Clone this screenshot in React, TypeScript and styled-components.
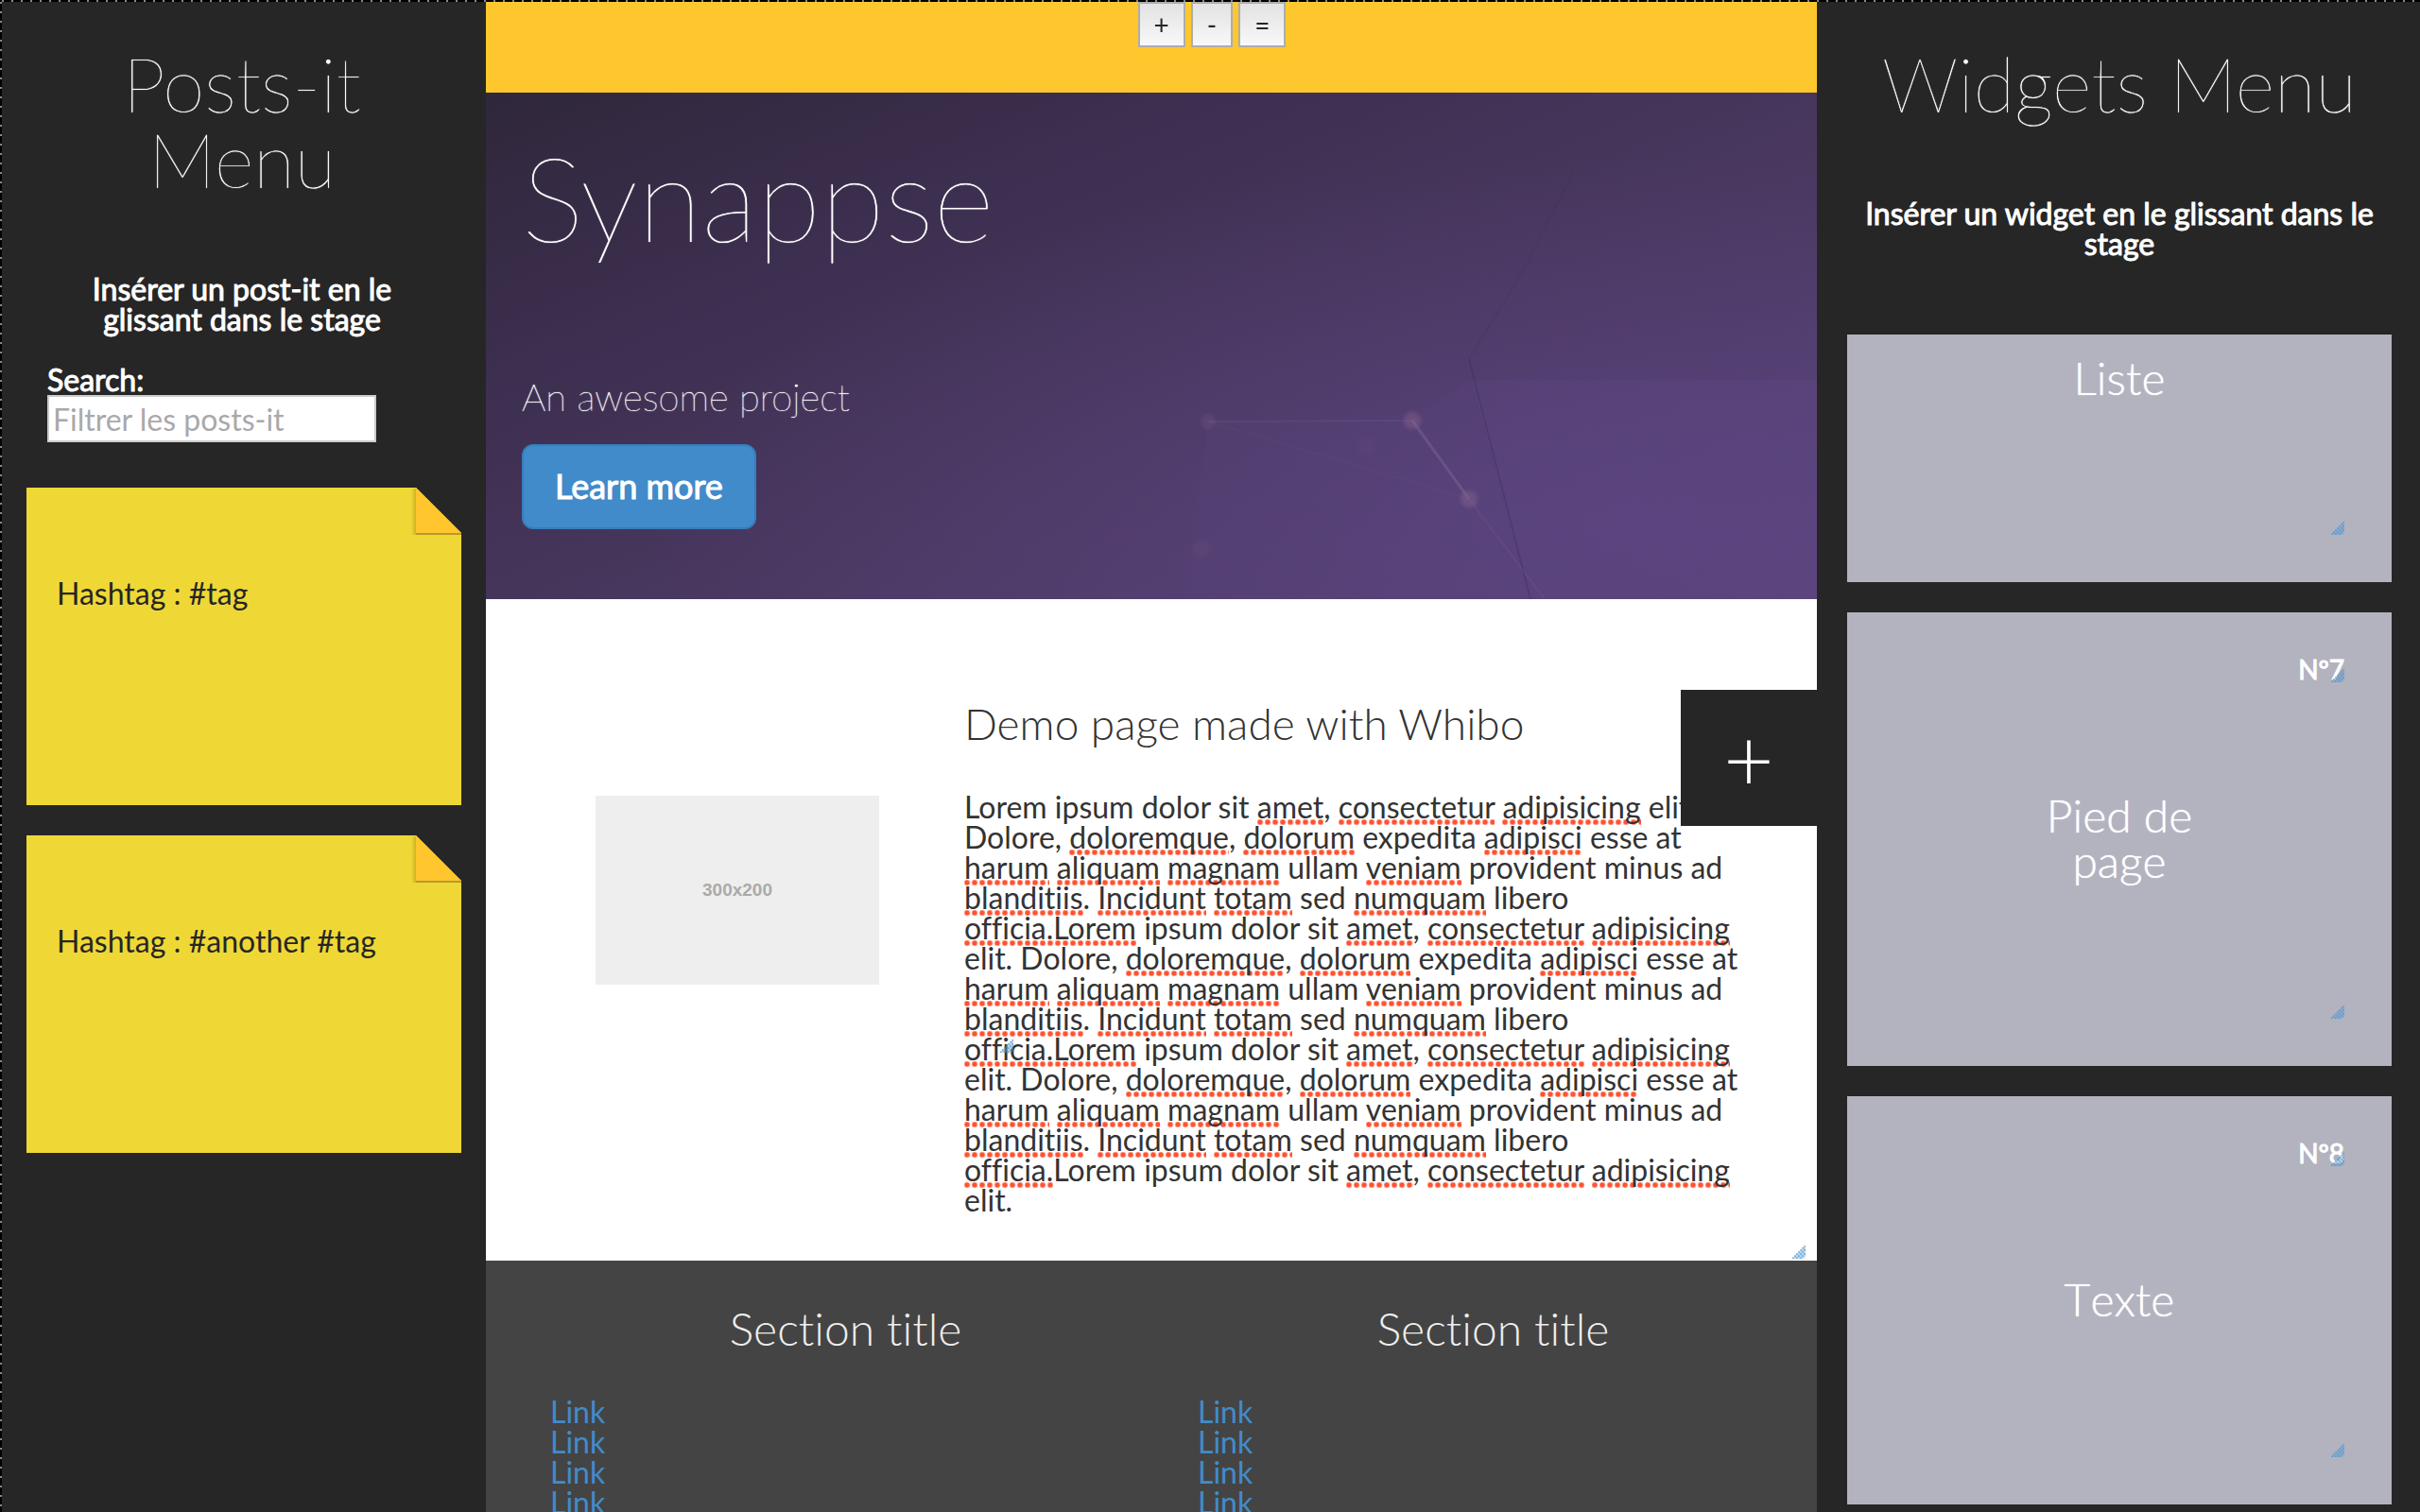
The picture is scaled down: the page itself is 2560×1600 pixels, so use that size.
import React from "react";
import styled, { createGlobalStyle } from "styled-components";

const GlobalStyle = createGlobalStyle`
  * { box-sizing: border-box; }
  html, body, #root { height: 100%; }
  body {
    margin: 0;
    overflow: hidden;
    background: #262626;
    color: #333;
    font-family: Lato, "Open Sans", sans-serif;
    font-size: 32px;
    line-height: 32px;
    font-variant-ligatures: none;
  }
  h1, h2, h3, p, ul { margin: 0; padding: 0; font-weight: 400; }
  button, input { font-family: inherit; }
`;

const Workspace = styled.div`
  display: grid;
  grid-template-columns: 20vw 55vw minmax(0, 1fr);
  height: 100vh;
  overflow: hidden;
  padding: 2px 0 0 2px;
  background:
    linear-gradient(90deg, #888 0 2px, #000 2px 10px) 2px 0 / 10px 2px repeat-x,
    linear-gradient(#888 0 2px, #000 2px 10px) 0 2px / 2px 10px repeat-y;
`;

const Toolbar = styled.div`
  position: fixed;
  top: 2px;
  left: 4px;
  right: 0;
  display: flex;
  justify-content: center;
  gap: 6px;
  z-index: 2;
`;

const ToolButton = styled.button`
  height: 48px;
  padding: 0 15px;
  border: 2px solid #adadad;
  background: linear-gradient(#e2e2e2, #f8f8f8);
  color: #262626;
  font-size: 28px;
  line-height: 44px;
`;

const Panel = styled.aside<{ $side: number }>`
  display: flex;
  flex-direction: column;
  min-width: 0;
  padding: 46px 30px 0 ${(p) => p.$side}px;
  background: #262626;
  color: #fff;
`;

const PanelTitle = styled.h1`
  font-size: 80px;
  line-height: 80px;
  font-weight: 100;
  text-align: center;
  text-shadow: 0 0 1px currentColor;
`;

const PanelHint = styled.p<{ $inset: number }>`
  margin: 82px 0 0;
  padding: 0 ${(p) => p.$inset}px;
  text-align: center;
  -webkit-text-stroke: 1px currentColor;
`;

const SearchField = styled.div`
  display: flex;
  flex-direction: column;
  align-items: flex-start;
  margin: 32px 0 48px;
  padding: 0 22px;
`;

const SearchLabel = styled.label`
  -webkit-text-stroke: 1px currentColor;
`;

const SearchInput = styled.input`
  width: 348px;
  max-width: 100%;
  height: 50px;
  padding: 0 4px;
  border: 2px solid #ccc;
  background: #fff;
  color: #333;
  font-size: 32px;
  &::placeholder { color: #a9a9a9; opacity: 1; }
`;

const NoteList = styled.div`
  display: flex;
  flex-direction: column;
  gap: 32px;
`;

const Note = styled.article`
  position: relative;
  height: 336px;
  margin-right: -4px;
  padding: 96px 32px;
  background: #efd835;
  color: #262626;
`;

const Fold = styled.svg`
  position: absolute;
  top: 0;
  right: 0;
  width: 56px;
  height: 52px;
`;

const WidgetList = styled.div`
  display: flex;
  flex-direction: column;
  gap: 32px;
  margin-top: 80px;
`;

const Widget = styled.article<{ $numbered: boolean }>`
  position: relative;
  display: flex;
  flex-direction: column;
  align-items: center;
  gap: 117px;
  padding: ${(p) => (p.$numbered ? "46px 50px 193px" : "22px 50px 192px")};
  background: #b3b3c0;
`;

const WidgetNumber = styled.span`
  position: relative;
  align-self: flex-end;
  font-size: 28px;
  line-height: 28px;
  -webkit-text-stroke: 1px currentColor;
`;

const WidgetTitle = styled.h3`
  max-width: 200px;
  font-size: 48px;
  line-height: 48px;
  font-weight: 300;
  font-kerning: none;
  text-align: center;
  text-shadow: 0 0 1px currentColor;
`;

const Grip = styled.svg<{ $right: number; $bottom: number }>`
  position: absolute;
  right: ${(p) => p.$right}px;
  bottom: ${(p) => p.$bottom}px;
  width: 14px;
  height: 14px;
`;

const Stage = styled.main`
  position: relative;
  display: flex;
  flex-direction: column;
  min-width: 0;
  overflow: hidden;
  background: #444;
`;

const Banner = styled.div`
  flex: none;
  height: 96px;
  background: #ffc72e;
`;

const Hero = styled.header`
  position: relative;
  flex: none;
  display: flex;
  flex-direction: column;
  align-items: flex-start;
  padding: 46px 38px 74px;
  color: #fff;
  background:
    radial-gradient(ellipse at 85% 85%, rgba(96, 72, 140, 0.5), rgba(96, 72, 140, 0) 60%),
    linear-gradient(158deg, #2f273a 0%, #3d2f50 28%, #4b3962 62%, #584275 100%);
`;

const HeroArt = styled.svg`
  position: absolute;
  top: 0;
  right: 0;
  width: 1408px;
  height: 536px;
`;

const HeroTitle = styled.h1`
  position: relative;
  font-size: 124px;
  line-height: 128px;
  font-weight: 100;
  text-shadow: 0 0 1px currentColor;
`;

const HeroLead = styled.p`
  position: relative;
  margin: 124px 0 26px;
  font-size: 40px;
  line-height: 48px;
  font-weight: 100;
  text-shadow: 0 0 1px currentColor, 0 0 1px currentColor;
`;

const LearnMore = styled.button`
  position: relative;
  padding: 18px 33px 20px;
  border: 2px solid #357ebd;
  border-radius: 12px;
  background: #428bca;
  color: #fff;
  font-size: 36px;
  line-height: 48px;
  -webkit-text-stroke: 1px currentColor;
`;

const Demo = styled.section`
  position: relative;
  flex: none;
  display: grid;
  grid-template-columns: 390px minmax(0, 1fr);
  align-items: start;
  padding: 108px 74px 48px 116px;
  background: #fff;
`;

const Placeholder = styled.div`
  display: flex;
  align-items: center;
  justify-content: center;
  width: 300px;
  height: 200px;
  margin-top: 100px;
  background: #eee;
  color: #aaa;
  font: bold 19px/24px "Liberation Sans", Arial, sans-serif;
`;

const DemoTitle = styled.h2`
  margin-bottom: 48px;
  font-size: 46px;
  line-height: 48px;
  font-weight: 300;
`;

const Misspelt = styled.span`
  background: radial-gradient(circle at 3px 3px, #ff5230 2px, rgba(255, 82, 48, 0.4) 3px, rgba(255, 82, 48, 0) 4px)
    0 100% / 8px 6px repeat-x;
`;

const AddTab = styled.button`
  position: absolute;
  top: 96px;
  right: 0;
  width: 144px;
  height: 144px;
  padding: 0;
  border: 0;
  background: #262626;
  color: #fff;
  font-size: 92px;
  line-height: 144px;
  font-weight: 300;
`;

const Footer = styled.footer`
  display: grid;
  grid-template-columns: 1fr 1fr;
  padding: 48px 0 0 38px;
  color: #eee;
`;

const FooterTitle = styled.h3`
  margin-bottom: 48px;
  font-size: 48px;
  line-height: 48px;
  font-weight: 300;
  text-align: center;
`;

const LinkList = styled.ul`
  padding-left: 30px;
  list-style: none;
`;

const FooterLink = styled.a`
  color: #428bca;
  text-decoration: none;
`;

function ResizeGrip({ right, bottom }: { right: number; bottom: number }) {
  return (
    <Grip $right={right} $bottom={bottom} viewBox="0 0 14 14" aria-hidden="true">
      <path d="M14 0V12L12 14H0Z" fill="#5b9fd4" opacity="0.35" />
      <path d="M0 14L14 0M4 14L14 4M8 14L14 8" fill="none" stroke="#4a93cd" strokeWidth="2" strokeDasharray="2 1" opacity="0.65" />
    </Grip>
  );
}

function NoteFold({ id }: { id: string }) {
  return (
    <Fold viewBox="0 0 56 52" aria-hidden="true">
      <defs>
        <linearGradient id={id} x1="0" x2="1">
          <stop offset="0" stopColor="#b49c1c" stopOpacity="0" />
          <stop offset="1" stopColor="#b49c1c" stopOpacity="0.6" />
        </linearGradient>
      </defs>
      <path d="M8 0H56V48Z" fill="#262626" />
      <rect x="3" y="1" width="5" height="49" fill={`url(#${id})`} />
      <path d="M8 0L56 48H8Z" fill="#ffc62e" />
      <rect x="8" y="48" width="48" height="2" fill="#b59b29" />
    </Fold>
  );
}

const SENTENCES =
  " ipsum dolor sit *amet*, *consectetur* *adipisicing* elit. Dolore, *doloremque*, *dolorum* expedita *adipisci* esse at *harum* *aliquam* *magnam* ullam *veniam* provident minus ad *blanditiis*. *Incidunt* *totam* sed *numquam* libero ";
const COPY =
  "Lorem" + SENTENCES + "*officia.Lorem*" + SENTENCES + "*officia.Lorem*" + SENTENCES +
  "*officia.*Lorem ipsum dolor sit *amet*, *consectetur* *adipisicing* elit.";

const NOTES = ["Hashtag : #tag", "Hashtag : #another #tag"];
const WIDGETS = [
  { title: "Liste", number: "" },
  { title: "Pied de page", number: "Nº7" },
  { title: "Texte", number: "Nº8" },
];

export default function App() {
  return (
    <>
      <GlobalStyle />
      <Workspace>
        <Panel $side={26}>
          <PanelTitle>Posts-it Menu</PanelTitle>
          <PanelHint $inset={44}>Insérer un post-it en le glissant dans le stage</PanelHint>
          <SearchField>
            <SearchLabel htmlFor="note-filter">Search:</SearchLabel>
            <SearchInput id="note-filter" type="text" placeholder="Filtrer les posts-it" />
          </SearchField>
          <NoteList>
            {NOTES.map((text, i) => (
              <Note key={text}>
                <p>{text}</p>
                <NoteFold id={`fold-shade-${i}`} />
              </Note>
            ))}
          </NoteList>
        </Panel>

        <Stage>
          <Banner />
          <Hero>
            <HeroArt viewBox="0 0 1408 536" aria-hidden="true">
              <defs>
                <linearGradient id="facet" x1="0" y1="0" x2="0" y2="1">
                  <stop offset="0" stopColor="#7a5cb0" stopOpacity="0.09" />
                  <stop offset="1" stopColor="#7a5cb0" stopOpacity="0.03" />
                </linearGradient>
                <radialGradient id="node">
                  <stop offset="0.5" stopColor="#8a6590" stopOpacity="0.4" />
                  <stop offset="1" stopColor="#8a6590" stopOpacity="0" />
                </radialGradient>
              </defs>
              <path d="M1042 304H1408V536H1105Z" fill="url(#facet)" />
              <path d="M764 348L980 347L1040 304L1105 536H740Z" fill="url(#facet)" opacity="0.5" />
              <path d="M1151 82L1100 184L1040 282" fill="none" stroke="#3c2b58" strokeWidth="2" opacity="0.12" />
              <path d="M1040 282L1105 536" fill="none" stroke="#3c2b58" strokeWidth="2" opacity="0.3" />
              <path d="M764 348L980 347M1040 430L1120 536" fill="none" stroke="#8b78ad" strokeWidth="2" opacity="0.14" />
              <path d="M764 348L1040 430" fill="none" stroke="#8b78ad" strokeWidth="2" opacity="0.06" />
              <path d="M980 347L1040 430" stroke="#a08bb8" strokeWidth="3" opacity="0.24" />
              <circle cx="980" cy="347" r="12" fill="url(#node)" />
              <circle cx="1040" cy="430" r="12" fill="url(#node)" />
              <circle cx="764" cy="348" r="10" fill="url(#node)" opacity="0.5" />
              <circle cx="757" cy="482" r="12" fill="url(#node)" opacity="0.25" />
              <circle cx="931" cy="375" r="12" fill="url(#node)" opacity="0.15" />
            </HeroArt>
            <HeroTitle>Synappse</HeroTitle>
            <HeroLead>An awesome project</HeroLead>
            <LearnMore type="button">Learn more</LearnMore>
          </Hero>
          <Demo>
            <Placeholder>300x200</Placeholder>
            <div>
              <DemoTitle>Demo page made with Whibo</DemoTitle>
              <p>
                {COPY.split("*").map((part, i) =>
                  i % 2 ? <Misspelt key={i}>{part}</Misspelt> : <React.Fragment key={i}>{part}</React.Fragment>
                )}
              </p>
            </div>
            <ResizeGrip right={850} bottom={220} />
            <ResizeGrip right={12} bottom={2} />
            <AddTab type="button" aria-label="Ajouter">+</AddTab>
          </Demo>
          <Footer>
            {[0, 1].map((column) => (
              <section key={column}>
                <FooterTitle>Section title</FooterTitle>
                <LinkList>
                  {[0, 1, 2, 3].map((row) => (
                    <li key={row}>
                      <FooterLink href="#">Link</FooterLink>
                    </li>
                  ))}
                </LinkList>
              </section>
            ))}
          </Footer>
        </Stage>

        <Panel $side={32}>
          <PanelTitle>Widgets Menu</PanelTitle>
          <PanelHint $inset={10}>Insérer un widget en le glissant dans le stage</PanelHint>
          <WidgetList>
            {WIDGETS.map(({ title, number }) => (
              <Widget key={title} $numbered={number !== ""}>
                {number && (
                  <WidgetNumber>
                    {number}
                    <ResizeGrip right={0} bottom={0} />
                  </WidgetNumber>
                )}
                <WidgetTitle>{title}</WidgetTitle>
                <ResizeGrip right={50} bottom={50} />
              </Widget>
            ))}
          </WidgetList>
        </Panel>
        <Toolbar>
          <ToolButton type="button">+</ToolButton>
          <ToolButton type="button">-</ToolButton>
          <ToolButton type="button">=</ToolButton>
        </Toolbar>
      </Workspace>
    </>
  );
}
